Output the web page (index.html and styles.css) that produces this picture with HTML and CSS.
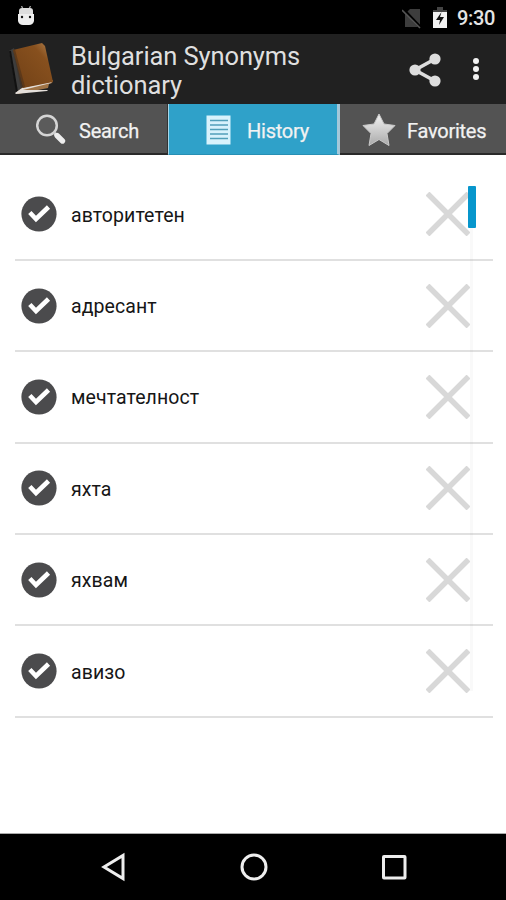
FILE: index.html
```html
<!DOCTYPE html>
<html lang="en">
<head>
<meta charset="utf-8">
<title>Bulgarian Synonyms dictionary</title>
<link rel="stylesheet" href="styles.css">
</head>
<body>
<svg class="defs" width="0" height="0">
  <symbol id="check" viewBox="0 0 36 36"><circle cx="18" cy="18" r="17.6" fill="#4b4b4d"/><path d="M8.800 16.500l6.200 6.500L27.500 11" fill="none" stroke="#fff" stroke-width="4.600"/></symbol>
  <symbol id="cross" viewBox="0 0 44 44"><path d="M1.500 1.500l41 41M42.500 1.500l-41 41" fill="none" stroke="#d8d8d8" stroke-width="5.500"/></symbol>
</svg>
<div class="screen">
  <div class="status">
    <svg class="droid" width="18" height="20" viewBox="0 0 18 20"><path d="M4.500 0l2 4M13.500 0l-2 4" stroke="#aaa" stroke-width="1.300"/><path d="M2 5q0-3 3-3h8q3 0 3 3v4H2z" fill="#ddd"/><path d="M1 8h16v7q-1 4-5 4H6q-4 0-5-4z" fill="#eee"/><circle cx="5" cy="11" r="1.200" fill="#111"/><circle cx="13" cy="11" r="1.200" fill="#111"/></svg>
    <div class="status-right">
      <svg width="20" height="21" viewBox="0 0 20 21"><path d="M8 1h10v18H3V6z" fill="#3d3d3d"/><path d="M1 1l18 19" stroke="#000" stroke-width="3"/><path d="M0 2l18 18" stroke="#555" stroke-width="1.600"/></svg>
      <svg class="battery" width="14" height="21" viewBox="0 0 14 21"><path d="M4 0h6v3h4v6H0V3h4z" fill="#444"/><path d="M0 5h14v16H0z" fill="#f2f2f2"/><path d="M8.500 5L3 13h4l-1 5 5-8H7z" fill="#111"/></svg>
      <span class="time">9:30</span>
    </div>
  </div>
  <header class="header">
    <svg class="book" width="48" height="54" viewBox="0 0 48 54">
      <defs><linearGradient id="cover" x1="0" y1="1" x2="1" y2="0"><stop offset="0" stop-color="#704016"/><stop offset=".72" stop-color="#87501e"/><stop offset="1" stop-color="#b48350"/></linearGradient></defs>
      <path d="M1 9L6 6l9 41-6 4z" fill="#3d3d3d"/><path d="M2 9l7 41" stroke="#111" stroke-width="2"/>
      <path d="M9 50l6-5 30-7-1 3-3 1-1 4-30 6z" fill="#a07446"/>
      <path d="M7 51l7-5 30-7-1 2-28 7h25l-1 1-31 3z" fill="#e4dfda"/>
      <path d="M5 8L34 1l3 3 8 36-30 6z" fill="url(#cover)"/><path d="M5 8l2-.5 10 37-4 2z" fill="#422c19" opacity=".5"/>
    </svg>
    <h1 class="title">Bulgarian Synonyms<br>dictionary</h1>
    <svg class="share" width="32" height="34" viewBox="0 0 32 34"><path d="M26 6L6 17l20 11" fill="none" stroke="#ddd" stroke-width="3.600"/><g fill="#ddd"><circle cx="26" cy="6" r="5.600"/><circle cx="6" cy="17" r="5.600"/><circle cx="26" cy="28" r="5.600"/></g></svg>
    <svg class="more" width="8" height="24" viewBox="0 0 8 24" fill="#f2f2f2"><circle cx="4" cy="4" r="3"/><circle cx="4" cy="12" r="3"/><circle cx="4" cy="20" r="3"/></svg>
  </header>
  <nav class="tabs">
    <div class="tab search">
      <svg width="31" height="31" viewBox="0 0 31 31"><circle cx="11" cy="11.500" r="9.800" fill="#5b5b5b" stroke="#d5d5d5" stroke-width="2.500"/><path d="M18 18.500l4 4" stroke="#ccc" stroke-width="3"/><path d="M21 21.500l5.500 5.500" stroke="#eee" stroke-width="5.400" stroke-linecap="round"/></svg>
      <span>Search</span>
    </div>
    <div class="tab history">
      <svg width="25" height="30" viewBox="0 0 25 30"><path d="M.5.5h24v29H.5z" fill="#d8f2fc"/><path d="M4 5.500h18M4 10h18M4 14.500h18M4 19h18M4 23.500h18" stroke="#519fb9" stroke-width="1.500"/></svg>
      <span>History</span>
    </div>
    <div class="tab favorites">
      <svg width="34" height="34" viewBox="0 0 34 34"><defs><linearGradient id="star" x1="0" y1="0" x2="0" y2="1"><stop offset="0" stop-color="#f4f4f4"/><stop offset="1" stop-color="#a9a9a9"/></linearGradient></defs><path d="M17 1l5 10 11 1.500-8 8 2 12-10-6-10 6 2-12-8-8L12 11z" fill="url(#star)" stroke="#c9c9c9" stroke-width="1"/></svg>
      <span>Favorites</span>
    </div>
  </nav>
  <main class="list">
    <div class="row"><svg class="check"><use href="#check"/></svg><span>авторитетен</span><svg class="cross"><use href="#cross"/></svg></div>
    <div class="row"><svg class="check"><use href="#check"/></svg><span>адресант</span><svg class="cross"><use href="#cross"/></svg></div>
    <div class="row"><svg class="check"><use href="#check"/></svg><span>мечтателност</span><svg class="cross"><use href="#cross"/></svg></div>
    <div class="row"><svg class="check"><use href="#check"/></svg><span>яхта</span><svg class="cross"><use href="#cross"/></svg></div>
    <div class="row"><svg class="check"><use href="#check"/></svg><span>яхвам</span><svg class="cross"><use href="#cross"/></svg></div>
    <div class="row"><svg class="check"><use href="#check"/></svg><span>авизо</span><svg class="cross"><use href="#cross"/></svg></div>
    <div class="track"><div class="thumb"></div></div>
  </main>
  <footer class="navbar">
    <svg width="28" height="30" viewBox="0 0 28 30"><path d="M24 3.500v23L5 15z"/></svg>
    <svg width="28" height="30" viewBox="0 0 28 30"><circle cx="14" cy="15" r="12"/></svg>
    <svg width="28" height="30" viewBox="0 0 28 30"><rect x="3.500" y="4.500" width="21.500" height="21.500" rx=".5"/></svg>
  </footer>
</div>
</body>
</html>
```
FILE: styles.css
```css
* { box-sizing: border-box; }
body { margin: 0; background: #fff; font-family: Roboto, "Liberation Sans", sans-serif; }
svg { display: block; flex: none; }
.defs { position: absolute; }
.screen { width: 506px; height: 900px; display: flex; flex-direction: column; overflow: hidden; }
.status { height: 34px; background: #000; display: flex; justify-content: space-between; padding: 6px 11px 0 17px; }
.status-right { display: flex; padding-top: 2px; }
.battery { margin: -1px 10px 0 11px; }
.time { color: #e4e4e4; font-size: 20px; font-weight: 500; line-height: 21px; width: 38px; letter-spacing: -.3px; white-space: nowrap; }
.header { height: 70px; background: #212121; display: flex; align-items: center; padding-left: 8px; }
.book { margin-top: -1px; }
.title { margin: 4px 0 0 15px; width: 338px; font-size: 25.500px; line-height: 29.500px; font-weight: 400; letter-spacing: -.1px; color: #dfdfdf; white-space: nowrap; }
.share { margin-top: 1px; }
.more { margin-left: 31px; }
.tabs { height: 51px; display: flex; background: #535353; }
.tab { height: 51px; display: flex; align-items: center; color: #f2f2f2; font-size: 20px; letter-spacing: -.25px; border-bottom: 2px solid #292929; }
.tab span { padding-top: 4px; -webkit-text-stroke: .25px currentColor; }
.search { width: 168px; padding-left: 36px; gap: 12px; border-right: 1px solid #333; }
.search svg { margin-top: 2px; }
.history { width: 172px; padding-left: 37px; gap: 16px; background: #2fa1c9; border-left: 1px solid #a9d6e7; border-right: 3px solid #a5c8d9; border-bottom: 1px solid #278fb4; }
.history svg { margin-top: 1px; }
.history span { padding-top: 3px; }
.favorites { width: 166px; padding-left: 22px; gap: 11px; }
.favorites svg { margin-top: 2px; }
.list { position: relative; flex: 1; padding: 14.500px 13px 0 15px; border-bottom: 1px solid #aaa; }
.row { height: 91.400px; display: flex; align-items: center; padding: 0 23px 0 6px; border-bottom: 2px solid #e0e0e0; color: #161616; font-size: 19.500px; }
.row span { flex: 1; margin-left: 14px; padding-top: 2px; letter-spacing: .08px; }
.check { width: 36px; height: 36px; }
.cross { width: 44px; height: 44px; overflow: visible; }
.track { position: absolute; left: 468px; top: 31px; width: 8px; height: 505px; background: linear-gradient(90deg, transparent 2px, rgba(0,0,0,.025) 2px, rgba(0,0,0,.025) 5px, transparent 5px); }
.thumb { width: 8px; height: 42px; background: #0796cc; border-radius: 1px; }
.navbar { height: 66px; background: #000; display: flex; justify-content: space-between; align-items: center; padding: 0 98px 0 99px; }
.navbar svg { fill: none; stroke: #eee; stroke-width: 3px; }
```
